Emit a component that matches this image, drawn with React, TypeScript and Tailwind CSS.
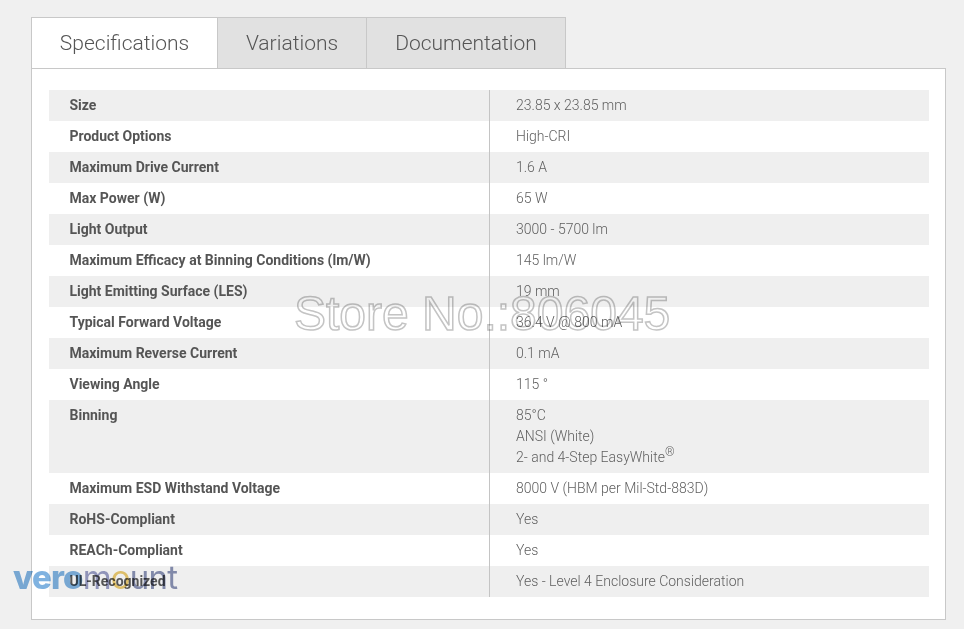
const rows = [
  { label: "Size", value: ["23.85 x 23.85 mm"] },
  { label: "Product Options", value: ["High-CRI"] },
  { label: "Maximum Drive Current", value: ["1.6 A"] },
  { label: "Max Power (W)", value: ["65 W"] },
  { label: "Light Output", value: ["3000 - 5700 lm"] },
  { label: "Maximum Efficacy at Binning Conditions (lm/W)", value: ["145 lm/W"] },
  { label: "Light Emitting Surface (LES)", value: ["19 mm"] },
  { label: "Typical Forward Voltage", value: ["36.4 V @ 800 mA"] },
  { label: "Maximum Reverse Current", value: ["0.1 mA"] },
  { label: "Viewing Angle", value: ["115 °"] },
  { label: "Binning", value: ["85°C", "ANSI (White)", "2- and 4-Step EasyWhite"] },
  { label: "Maximum ESD Withstand Voltage", value: ["8000 V (HBM per Mil-Std-883D)"] },
  { label: "RoHS-Compliant", value: ["Yes"] },
  { label: "REACh-Compliant", value: ["Yes"] },
  { label: "UL-Recognized", value: ["Yes - Level 4 Enclosure Consideration"] },
];

export default function App() {
  return (
    <div className="relative w-[964px] h-[629px] overflow-hidden bg-[#f0f0f0] pt-[17px] pl-[31px] font-['Roboto',sans-serif]">
      <div className="flex h-[51px] text-[21px] font-light text-[#555]">
        <div className="w-[187px] h-[51px] pt-[2px] bg-white border border-[#c8c8c8] border-b-0 flex items-center justify-center">
          Specifications
        </div>
        <div className="w-[149px] h-[51px] pt-[2px] bg-[#e1e1e1] border border-l-0 border-b-0 border-[#c8c8c8] flex items-center justify-center">
          Variations
        </div>
        <div className="w-[199px] h-[51px] pt-[2px] bg-[#e1e1e1] border border-l-0 border-b-0 border-[#c8c8c8] flex items-center justify-center">
          Documentation
        </div>
      </div>
      <div className="w-[915px] h-[552px] bg-white border border-[#c8c8c8] pt-[21px] pl-[17px]">
        <div className="w-[880px] text-sm">
          {rows.map((row, i) => (
            <div key={row.label} className={`flex ${i % 2 === 0 ? "bg-[#efefef]" : "bg-white"}`}>
              <div className="w-[440px] pl-[20.5px] py-[5px] leading-[21px] font-bold text-[#555]">
                {row.label}
              </div>
              <div className="flex-1 border-l border-[#c4c4c4] pl-[26px] py-[5px] leading-[21px] font-light text-[#5f5f5f]">
                {row.value.map((v) => (
                  <div key={v}>
                    {v}
                    {v.includes("EasyWhite") && (
                      <sup className="text-[12px] leading-none">®</sup>
                    )}
                  </div>
                ))}
              </div>
            </div>
          ))}
        </div>
      </div>
      <div className="absolute left-[294px] top-[287px] text-[48px] leading-[54px] whitespace-nowrap font-['Liberation_Sans',sans-serif] text-transparent mix-blend-multiply [-webkit-text-stroke:1.5px_#c4c4c4]">
        Store No.:806045
      </div>
      <div className="absolute left-[13px] top-[557px] text-[33px] leading-[40px] tracking-[-0.8px] whitespace-nowrap font-['Inter',sans-serif] mix-blend-multiply">
        <span className="font-extrabold text-[#7fb2e0]">vero</span>
        <span className="font-normal text-[#9a9ec6]">m</span>
        <span className="font-normal text-[#eccb70]">o</span>
        <span className="font-normal text-[#8a92b4]">unt</span>
      </div>
    </div>
  );
}
